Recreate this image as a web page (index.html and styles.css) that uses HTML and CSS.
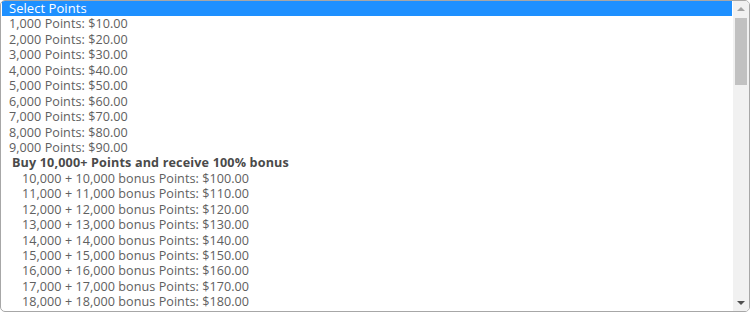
FILE: index.html
```html
<!DOCTYPE html>
<html lang="en">
    <head>
        <meta charset="UTF-8">
        <meta name="viewport" content="width=device-width, initial-scale=1.0">
        <title>Select Points</title>
        <link rel="stylesheet" href="styles.css">
    </head>
    <body>

        <div class="caixaPontos">
            <div class="listaPontos">
                <div class="opcao selecionada">Select Points</div>
                <div class="opcao">1,000 Points: $10.00</div>
                <div class="opcao">2,000 Points: $20.00</div>
                <div class="opcao">3,000 Points: $30.00</div>
                <div class="opcao">4,000 Points: $40.00</div>
                <div class="opcao">5,000 Points: $50.00</div>
                <div class="opcao">6,000 Points: $60.00</div>
                <div class="opcao">7,000 Points: $70.00</div>
                <div class="opcao">8,000 Points: $80.00</div>
                <div class="opcao">9,000 Points: $90.00</div>
                <div class="grupo">Buy 10,000+ Points and receive 100% bonus</div>
                <div class="opcao noGrupo">10,000 + 10,000 bonus Points: $100.00</div>
                <div class="opcao noGrupo">11,000 + 11,000 bonus Points: $110.00</div>
                <div class="opcao noGrupo">12,000 + 12,000 bonus Points: $120.00</div>
                <div class="opcao noGrupo">13,000 + 13,000 bonus Points: $130.00</div>
                <div class="opcao noGrupo">14,000 + 14,000 bonus Points: $140.00</div>
                <div class="opcao noGrupo">15,000 + 15,000 bonus Points: $150.00</div>
                <div class="opcao noGrupo">16,000 + 16,000 bonus Points: $160.00</div>
                <div class="opcao noGrupo">17,000 + 17,000 bonus Points: $170.00</div>
                <div class="opcao noGrupo">18,000 + 18,000 bonus Points: $180.00</div>
            </div>
            <!-- barra de rolagem -->
            <div class="rolagem">
                <div class="seta setaCima"></div>
                <div class="trilho">
                    <div class="polegar"></div>
                </div>
                <div class="seta setaBaixo"></div>
            </div>
        </div>

    </body>
</html>
```
FILE: styles.css
```css
body {
    margin: 0;
    font-family: "Open Sans", Arial, Helvetica, sans-serif;
    background-color: #fff;
}

.caixaPontos {
    width: 750px;
    height: 312px;
    box-sizing: border-box;
    border: 1px solid #a7a7a7;
    border-radius: 5px;
    display: flex;
    overflow: hidden;
    background-color: #fff;
}

.listaPontos {
    flex: 1;
    padding-left: 1px;
    overflow: hidden;
}

.opcao {
    height: 15.45px;
    line-height: 15.45px;
    padding-left: 7px;
    font-size: 12.6px;
    letter-spacing: 0.05px;
    color: #606060;
    white-space: nowrap;
}

.selecionada {
    background-color: #1e90ff;
    color: #fff;
    font-size: 13px;
    line-height: 15px;
}

.grupo {
    height: 15.45px;
    line-height: 15.45px;
    padding-left: 10px;
    font-size: 12.6px;
    letter-spacing: 0.15px;
    font-weight: bold;
    color: #4a4a4a;
    white-space: nowrap;
}

.noGrupo {
    padding-left: 20px;
}

.rolagem {
    width: 16px;
    margin-left: 1px;
    background-color: #f1f1f1;
    display: flex;
    flex-direction: column;
}

.seta {
    height: 16px;
    display: flex;
    align-items: center;
    justify-content: center;
}

.setaCima::after {
    content: "";
    border-left: 4px solid transparent;
    border-right: 4px solid transparent;
    border-bottom: 4px solid #a3a3a3;
}

.setaBaixo::after {
    content: "";
    border-left: 4px solid transparent;
    border-right: 4px solid transparent;
    border-top: 4px solid #505050;
}

.trilho {
    flex: 1;
    padding: 1px 2px;
}

.polegar {
    height: 67px;
    background-color: #c1c1c1;
}
```
